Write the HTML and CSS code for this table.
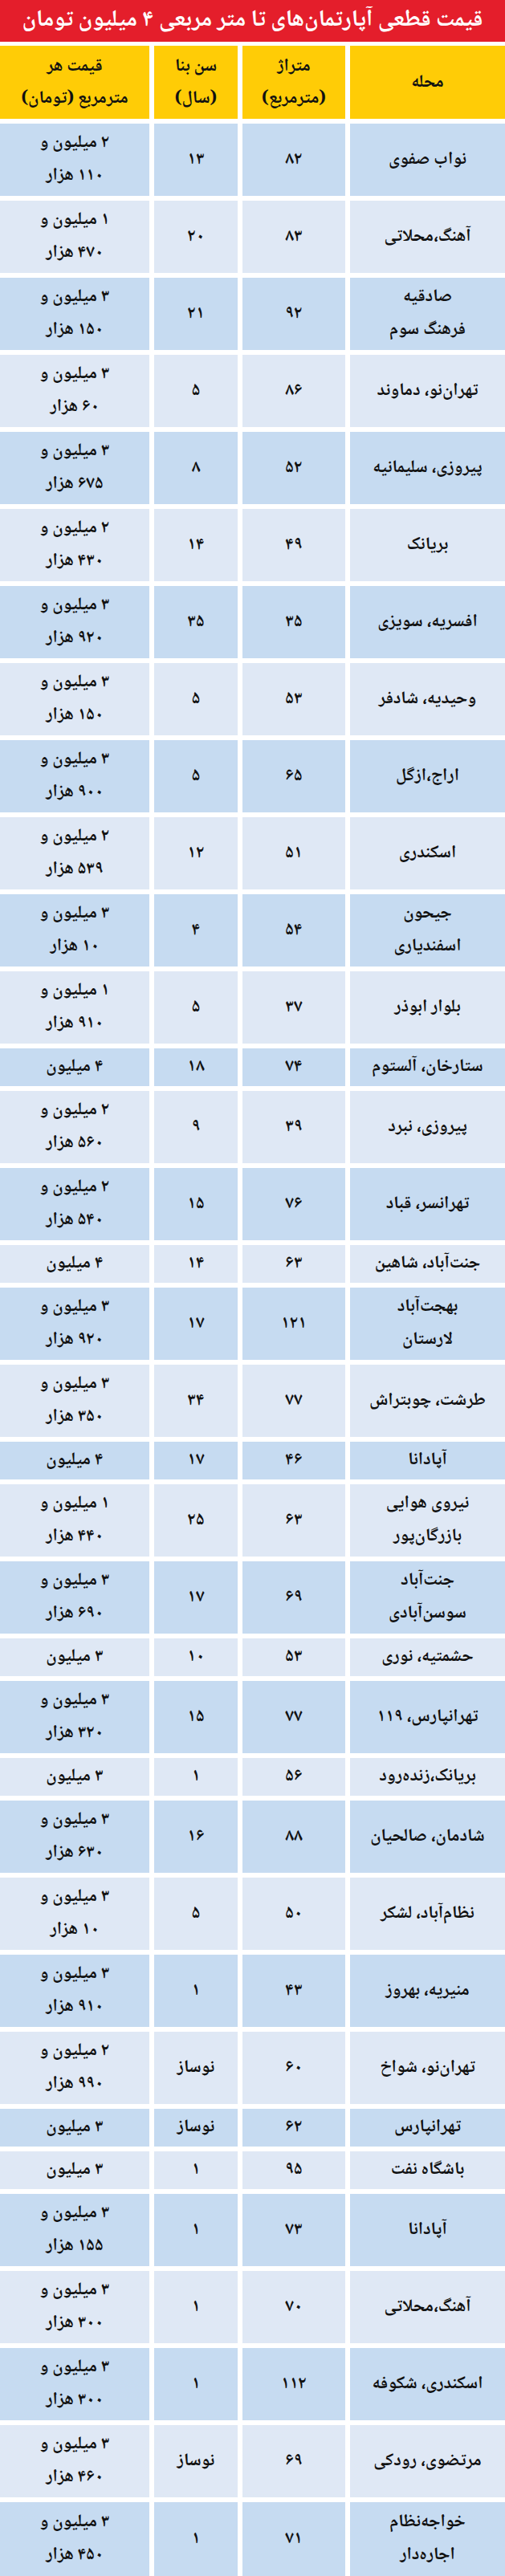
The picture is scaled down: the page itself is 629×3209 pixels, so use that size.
FILE: index.html
```html
<!DOCTYPE html>
<html lang="fa" dir="rtl">
<head>
<meta charset="utf-8">
<title>قیمت قطعی آپارتمان‌های تا متر مربعی ۴ میلیون تومان</title>
<link rel="stylesheet" href="styles.css">
</head>
<body>
<div class="page">
  <h1 class="title">قیمت قطعی آپارتمان‌های تا متر مربعی ۴ میلیون تومان</h1>
  <div class="table">
    <div class="row head">
      <div class="cell">محله</div>
      <div class="cell">متراژ<br>(مترمربع)</div>
      <div class="cell">سن بنا<br>(سال)</div>
      <div class="cell">قیمت هر<br>مترمربع (تومان)</div>
    </div>
    <div class="row dark two"><div class="cell">نواب صفوی</div><div class="cell">۸۲</div><div class="cell">۱۳</div><div class="cell">۲ میلیون و<br>۱۱۰ هزار</div></div>
    <div class="row light two"><div class="cell">آهنگ،محلاتی</div><div class="cell">۸۳</div><div class="cell">۲۰</div><div class="cell">۱ میلیون و<br>۴۷۰ هزار</div></div>
    <div class="row dark two"><div class="cell">صادقیه<br>فرهنگ سوم</div><div class="cell">۹۲</div><div class="cell">۲۱</div><div class="cell">۳ میلیون و<br>۱۵۰ هزار</div></div>
    <div class="row light two"><div class="cell">تهران‌نو، دماوند</div><div class="cell">۸۶</div><div class="cell">۵</div><div class="cell">۳ میلیون و<br>۶۰ هزار</div></div>
    <div class="row dark two"><div class="cell">پیروزی، سلیمانیه</div><div class="cell">۵۲</div><div class="cell">۸</div><div class="cell">۳ میلیون و<br>۶۷۵ هزار</div></div>
    <div class="row light two"><div class="cell">بریانک</div><div class="cell">۴۹</div><div class="cell">۱۴</div><div class="cell">۲ میلیون و<br>۴۳۰ هزار</div></div>
    <div class="row dark two"><div class="cell">افسریه، سویزی</div><div class="cell">۳۵</div><div class="cell">۳۵</div><div class="cell">۳ میلیون و<br>۹۲۰ هزار</div></div>
    <div class="row light two"><div class="cell">وحیدیه، شادفر</div><div class="cell">۵۳</div><div class="cell">۵</div><div class="cell">۳ میلیون و<br>۱۵۰ هزار</div></div>
    <div class="row dark two"><div class="cell">اراج،ازگل</div><div class="cell">۶۵</div><div class="cell">۵</div><div class="cell">۳ میلیون و<br>۹۰۰ هزار</div></div>
    <div class="row light two"><div class="cell">اسکندری</div><div class="cell">۵۱</div><div class="cell">۱۲</div><div class="cell">۲ میلیون و<br>۵۳۹ هزار</div></div>
    <div class="row dark two"><div class="cell">جیحون<br>اسفندیاری</div><div class="cell">۵۴</div><div class="cell">۴</div><div class="cell">۳ میلیون و<br>۱۰ هزار</div></div>
    <div class="row light two"><div class="cell">بلوار ابوذر</div><div class="cell">۳۷</div><div class="cell">۵</div><div class="cell">۱ میلیون و<br>۹۱۰ هزار</div></div>
    <div class="row dark one"><div class="cell">ستارخان، آلستوم</div><div class="cell">۷۴</div><div class="cell">۱۸</div><div class="cell">۴ میلیون</div></div>
    <div class="row light two"><div class="cell">پیروزی، نبرد</div><div class="cell">۳۹</div><div class="cell">۹</div><div class="cell">۲ میلیون و<br>۵۶۰ هزار</div></div>
    <div class="row dark two"><div class="cell">تهرانسر، قباد</div><div class="cell">۷۶</div><div class="cell">۱۵</div><div class="cell">۲ میلیون و<br>۵۴۰ هزار</div></div>
    <div class="row light one"><div class="cell">جنت‌آباد، شاهین</div><div class="cell">۶۳</div><div class="cell">۱۴</div><div class="cell">۴ میلیون</div></div>
    <div class="row dark two"><div class="cell">بهجت‌آباد<br>لارستان</div><div class="cell">۱۲۱</div><div class="cell">۱۷</div><div class="cell">۳ میلیون و<br>۹۲۰ هزار</div></div>
    <div class="row light two"><div class="cell">طرشت، چوبتراش</div><div class="cell">۷۷</div><div class="cell">۳۴</div><div class="cell">۳ میلیون و<br>۳۵۰ هزار</div></div>
    <div class="row dark one"><div class="cell">آپادانا</div><div class="cell">۴۶</div><div class="cell">۱۷</div><div class="cell">۴ میلیون</div></div>
    <div class="row light two"><div class="cell">نیروی هوایی<br>بازرگان‌پور</div><div class="cell">۶۳</div><div class="cell">۲۵</div><div class="cell">۱ میلیون و<br>۴۴۰ هزار</div></div>
    <div class="row dark two"><div class="cell">جنت‌آباد<br>سوسن‌آبادی</div><div class="cell">۶۹</div><div class="cell">۱۷</div><div class="cell">۳ میلیون و<br>۶۹۰ هزار</div></div>
    <div class="row light one"><div class="cell">حشمتیه، نوری</div><div class="cell">۵۳</div><div class="cell">۱۰</div><div class="cell">۳ میلیون</div></div>
    <div class="row dark two"><div class="cell">تهرانپارس، ۱۱۹</div><div class="cell">۷۷</div><div class="cell">۱۵</div><div class="cell">۳ میلیون و<br>۳۲۰ هزار</div></div>
    <div class="row light one"><div class="cell">بریانک،زنده‌رود</div><div class="cell">۵۶</div><div class="cell">۱</div><div class="cell">۳ میلیون</div></div>
    <div class="row dark two"><div class="cell">شادمان، صالحیان</div><div class="cell">۸۸</div><div class="cell">۱۶</div><div class="cell">۳ میلیون و<br>۶۳۰ هزار</div></div>
    <div class="row light two"><div class="cell">نظام‌آباد، لشکر</div><div class="cell">۵۰</div><div class="cell">۵</div><div class="cell">۳ میلیون و<br>۱۰ هزار</div></div>
    <div class="row dark two"><div class="cell">منیریه، بهروز</div><div class="cell">۴۳</div><div class="cell">۱</div><div class="cell">۳ میلیون و<br>۹۱۰ هزار</div></div>
    <div class="row light two"><div class="cell">تهران‌نو، شواخ</div><div class="cell">۶۰</div><div class="cell">نوساز</div><div class="cell">۲ میلیون و<br>۹۹۰ هزار</div></div>
    <div class="row dark one"><div class="cell">تهرانپارس</div><div class="cell">۶۲</div><div class="cell">نوساز</div><div class="cell">۳ میلیون</div></div>
    <div class="row light one"><div class="cell">باشگاه نفت</div><div class="cell">۹۵</div><div class="cell">۱</div><div class="cell">۳ میلیون</div></div>
    <div class="row dark two"><div class="cell">آپادانا</div><div class="cell">۷۳</div><div class="cell">۱</div><div class="cell">۳ میلیون و<br>۱۵۵ هزار</div></div>
    <div class="row light two"><div class="cell">آهنگ،محلاتی</div><div class="cell">۷۰</div><div class="cell">۱</div><div class="cell">۳ میلیون و<br>۳۰۰ هزار</div></div>
    <div class="row dark two"><div class="cell">اسکندری، شکوفه</div><div class="cell">۱۱۲</div><div class="cell">۱</div><div class="cell">۳ میلیون و<br>۳۰۰ هزار</div></div>
    <div class="row light two"><div class="cell">مرتضوی، رودکی</div><div class="cell">۶۹</div><div class="cell">نوساز</div><div class="cell">۳ میلیون و<br>۴۶۰ هزار</div></div>
    <div class="row dark two last"><div class="cell">خواجه‌نظام<br>اجاره‌دار</div><div class="cell">۷۱</div><div class="cell">۱</div><div class="cell">۳ میلیون و<br>۴۵۰ هزار</div></div>
  </div>
</div>
</body>
</html>
```

FILE: styles.css
```css
html, body {
  margin: 0;
  padding: 0;
  background: #ffffff;
}

.page {
  width: 629px;
  direction: rtl;
  font-family: "Noto Naskh Arabic", "Noto Sans Arabic", "DejaVu Sans", sans-serif;
  color: #111111;
}

.title {
  margin: 0 0 5px 0;
  height: 52px;
  background: #e41e2b;
  color: #ffffff;
  font-size: 29px;
  font-weight: bold;
  line-height: 52px;
  text-align: center;
  white-space: nowrap;
  letter-spacing: -0.3px;
}

.table {
  display: flex;
  flex-direction: column;
  gap: 6px;
}

.row {
  display: grid;
  grid-template-columns: 193px 128px 104px 186px;
  column-gap: 6px;
}

.cell {
  display: flex;
  align-items: center;
  justify-content: center;
  text-align: center;
  font-weight: bold;
  font-size: 22px;
  line-height: 41px;
  white-space: nowrap;
}

.head { height: 91px; }
.head .cell { background: #ffcc06; line-height: 40px; font-size: 22px; }

.two { height: 90px; }
.one { height: 47px; }
.last { height: 92px; }

.dark .cell { background: #c6dbf1; }
.light .cell { background: #dfe8f5; }
```
